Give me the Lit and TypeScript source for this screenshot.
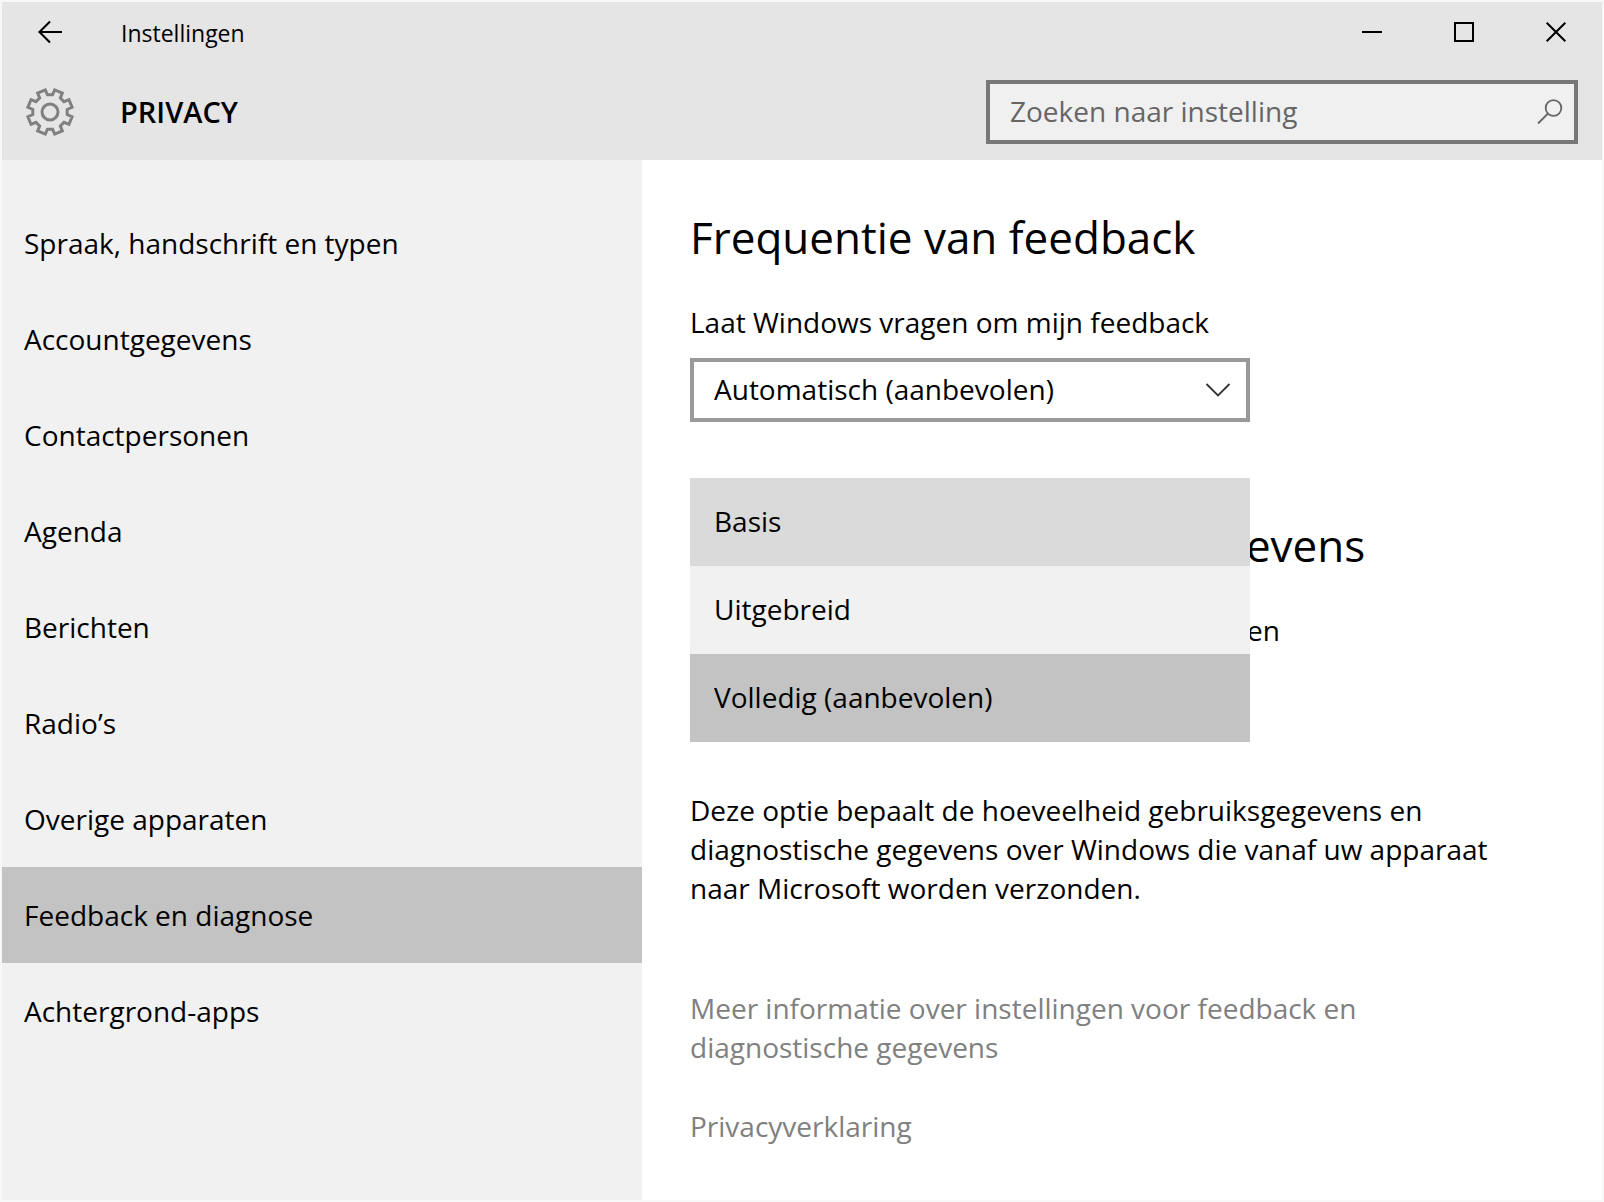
import { LitElement, html, css, svg } from "lit";
import { customElement, state } from "lit/decorators.js";
import { classMap } from "lit/directives/class-map.js";

const NAV_ITEMS = [
  "Spraak, handschrift en typen",
  "Accountgegevens",
  "Contactpersonen",
  "Agenda",
  "Berichten",
  "Radio’s",
  "Overige apparaten",
  "Feedback en diagnose",
  "Achtergrond-apps",
];

const LEVELS = ["Basis", "Uitgebreid", "Volledig (aanbevolen)"];

/** Outline of an eight-toothed gear centred on the origin. */
function gearPath(): string {
  const points: string[] = [];
  const at = (radius: number, degrees: number) => {
    const a = (degrees * Math.PI) / 180;
    points.push(`${(radius * Math.cos(a)).toFixed(2)} ${(radius * Math.sin(a)).toFixed(2)}`);
  };
  for (let i = 0; i < 8; i++) {
    const mid = i * 45 + 22.5;
    at(17.4, mid - 14);
    at(22.6, mid - 10.5);
    at(22.6, mid + 10.5);
    at(17.4, mid + 14);
  }
  return `M${points.join("L")}Z`;
}

@customElement("app-root")
export class AppRoot extends LitElement {
  static styles = css`
    :host {
      display: block;
      font-family: "Open Sans", "Noto Sans", sans-serif;
      font-size: 28px;
      font-weight: 400;
      line-height: 39px;
      color: #000;
    }
    * {
      box-sizing: border-box;
    }
    button,
    input,
    select {
      font: inherit;
      color: inherit;
      border: 0;
      border-radius: 0;
      margin: 0;
      padding: 0;
      background: none;
      appearance: none;
    }
    svg {
      display: block;
      fill: none;
      stroke: currentColor;
    }
    h1,
    h2,
    p,
    ul {
      margin: 0;
      padding: 0;
    }
    ul {
      list-style: none;
    }
    .window {
      display: flex;
      flex-direction: column;
      min-height: 100vh;
      border: 2px solid #f8f8f8;
      background: #fff;
    }
    .header {
      background: #e5e5e5;
    }
    .titlebar {
      display: flex;
      height: 60px;
    }
    .back {
      display: grid;
      place-items: center;
      width: 96px;
    }
    .title {
      flex: 1;
      padding-left: 23px;
      font-size: 23px;
      line-height: 62px;
    }
    .control {
      display: grid;
      place-items: center;
      width: 92px;
    }
    .section {
      display: flex;
      align-items: center;
      height: 98px;
      padding: 2px 24px 0 22px;
    }
    .gear {
      color: #808080;
    }
    .heading {
      flex: 1;
      padding: 0 0 2px 44px;
      font-size: 29px;
      font-weight: 600;
      line-height: 39px;
    }
    .search {
      display: flex;
      align-items: center;
      width: 592px;
      height: 64px;
      padding: 0 11px 0 20px;
      border: 4px solid #777;
      background: #f0f0f0;
      color: #666;
    }
    .search-input {
      flex: 1;
      min-width: 0;
      height: 56px;
      padding-bottom: 2px;
      outline: 0;
    }
    .search-input::placeholder {
      color: #666;
      opacity: 1;
    }
    .body {
      flex: 1;
      display: grid;
      grid-template-columns: 2fr 3fr;
    }
    .nav {
      padding-top: 35px;
      background: #f1f1f1;
    }
    .nav-link {
      display: block;
      padding: 0 22px;
      line-height: 96px;
      color: inherit;
      text-decoration: none;
    }
    .nav-link.selected {
      background: #c3c3c3;
    }
    .content {
      padding: 45px 72px 40px 48px;
    }
    .subject {
      font-size: 44px;
      font-weight: 400;
      line-height: 64px;
    }
    .subject.next {
      margin-top: 91px;
    }
    .label {
      display: block;
      margin: 34px 0 16px;
    }
    .field {
      position: relative;
      width: 560px;
      max-width: 100%;
    }
    .select {
      display: block;
      width: 100%;
      height: 64px;
      padding: 0 60px 2px 20px;
      border: 4px solid #999;
      background: #fff;
    }
    .chevron {
      position: absolute;
      right: 19px;
      top: 24px;
      pointer-events: none;
      color: #333;
    }
    .popup {
      position: absolute;
      left: 0;
      right: 0;
      bottom: -12px;
      background: #f1f1f1;
    }
    .option {
      display: block;
      width: 100%;
      padding: 0 24px 2px;
      text-align: left;
      line-height: 86px;
    }
    .option.hovered {
      background: #dadada;
    }
    .option.selected {
      background: #c3c3c3;
    }
    .description {
      margin-top: 61px;
    }
    .links {
      display: grid;
      gap: 40px;
      margin-top: 81px;
    }
    .link {
      color: #808080;
      text-decoration: none;
    }
  `;

  @state() private page = "Feedback en diagnose";
  @state() private hovered = "Basis";
  @state() private level = "Volledig (aanbevolen)";

  private renderChevron() {
    return html`<svg class="chevron" width="26" height="16" viewBox="0 0 26 16" stroke-width="1.8" aria-hidden="true">
      ${svg`<path d="M1.5 2 13 13.5 24.5 2" />`}
    </svg>`;
  }

  render() {
    return html`
      <div class="window">
        <header class="header">
          <div class="titlebar">
            <button class="back" aria-label="Terug">
              <svg width="26" height="24" viewBox="0 0 26 24" stroke-width="2.1" aria-hidden="true">
                <path d="M25 12H3M13 1.5 2.5 12 13 22.5" />
              </svg>
            </button>
            <div class="title">Instellingen</div>
            <button class="control" aria-label="Minimaliseren">
              <svg width="20" height="20" viewBox="0 0 20 20" stroke-width="2" aria-hidden="true">
                <path d="M0 10H20" />
              </svg>
            </button>
            <button class="control" aria-label="Maximaliseren">
              <svg width="20" height="20" viewBox="0 0 20 20" stroke-width="2" aria-hidden="true">
                <path d="M1 1H19V19H1Z" />
              </svg>
            </button>
            <button class="control" aria-label="Sluiten">
              <svg width="20" height="20" viewBox="0 0 20 20" stroke-width="2" aria-hidden="true">
                <path d="M.7.7 19.3 19.3M19.3.7.7 19.3" />
              </svg>
            </button>
          </div>
          <div class="section">
            <svg class="gear" width="52" height="52" viewBox="-26 -26 52 52" stroke-width="3" aria-hidden="true">
              <path d=${gearPath()} />
              <circle r="8" />
            </svg>
            <h1 class="heading">PRIVACY</h1>
            <div class="search">
              <input class="search-input" type="text" aria-label="Zoeken naar instelling" placeholder="Zoeken naar instelling" />
              <svg width="26" height="26" viewBox="0 0 26 26" stroke-width="1.8" aria-hidden="true">
                <circle cx="16.5" cy="9" r="7.8" />
                <path d="M11 14.5 1 24.5" />
              </svg>
            </div>
          </div>
        </header>
        <div class="body">
          <nav class="nav">
            <ul>
              ${NAV_ITEMS.map(
                (item) => html`<li>
                  <a
                    class=${classMap({ "nav-link": true, selected: item === this.page })}
                    href="#"
                    @click=${() => (this.page = item)}
                    >${item}</a
                  >
                </li>`
              )}
            </ul>
          </nav>
          <main class="content">
            <h2 class="subject">Frequentie van feedback</h2>
            <label class="label" for="frequency">Laat Windows vragen om mijn feedback</label>
            <div class="field">
              <select class="select" id="frequency">
                <option>Automatisch (aanbevolen)</option>
              </select>
              ${this.renderChevron()}
            </div>
            <h2 class="subject next">Diagnose en gebruikersgegevens</h2>
            <label class="label" for="level">Apparaatgegevens aan Microsoft overzenden</label>
            <div class="field">
              <select class="select" id="level" .value=${this.level}>
                ${LEVELS.map((l) => html`<option ?selected=${l === this.level}>${l}</option>`)}
              </select>
              ${this.renderChevron()}
              <div class="popup" role="listbox">
                ${LEVELS.map(
                  (l) => html`<button
                    class=${classMap({ option: true, hovered: l === this.hovered, selected: l === this.level })}
                    role="option"
                    aria-selected=${l === this.level}
                    @mouseenter=${() => (this.hovered = l)}
                    @click=${() => (this.level = l)}
                  >${l}</button>`
                )}
              </div>
            </div>
            <p class="description">
              Deze optie bepaalt de hoeveelheid gebruiksgegevens en diagnostische gegevens over Windows die vanaf uw
              apparaat naar Microsoft worden verzonden.
            </p>
            <div class="links">
              <a class="link" href="#">Meer informatie over instellingen voor feedback en diagnostische gegevens</a>
              <a class="link" href="#">Privacyverklaring</a>
            </div>
          </main>
        </div>
      </div>
    `;
  }
}
